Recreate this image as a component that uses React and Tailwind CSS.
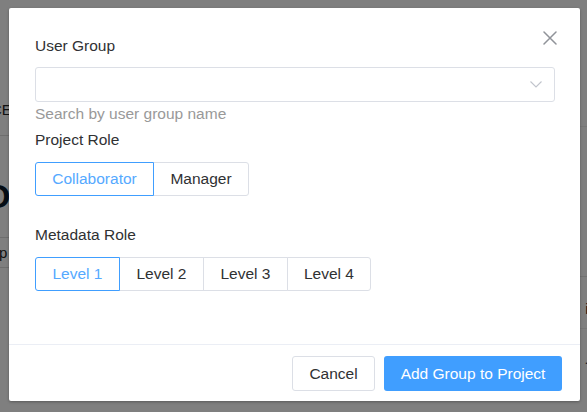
import React from "react";

function CloseIcon() {
  return (
    <svg width="14" height="14" viewBox="0 0 14 14" fill="none">
      <path d="M1 1 L13 13 M13 1 L1 13" stroke="#909399" strokeWidth="1.5" strokeLinecap="round" />
    </svg>
  );
}

function Chevron() {
  return (
    <svg width="12" height="7" viewBox="0 0 12 7" fill="none">
      <path d="M0.5 0.5 L6 6 L11.5 0.5" stroke="#c0c4cc" strokeWidth="1.1" />
    </svg>
  );
}

function SegButton({ children, active, first, className }) {
  return (
    <button
      className={
        "h-[34px] flex items-center justify-center text-[15.5px] border bg-white " +
        (first ? "" : "-ml-px ") +
        (active
          ? "relative z-10 border-[#409eff] text-[#55a9ff] "
          : "border-[#dcdfe6] text-[#303133] ") +
        (first ? "rounded-l-[3px] " : "") +
        className
      }
    >
      {children}
    </button>
  );
}

export default function App() {
  return (
    <div
      className="relative w-[587px] h-[412px] overflow-hidden bg-white"
      style={{ fontFamily: '"Liberation Sans", Arial, sans-serif' }}
    >
      {/* background page */}
      <div className="flex w-full h-full justify-between text-[#222]">
        <div className="flex flex-col w-[40px]">
          <div className="h-[100px]" />
          <div className="h-[36px] border-b border-[#ddd] flex items-start">
            <span className="-ml-[19px] text-[15px] leading-[20px]">ACE</span>
          </div>
          <div className="h-[40px]" />
          <div className="h-[40px] flex items-center">
            <span className="-ml-[16px] text-[34px] font-bold leading-[40px] text-[#0a1a2a]">OC</span>
          </div>
          <div className="h-[22px] border-b border-[#ddd]" />
          <div className="h-[30px] border-b border-[#ddd] flex items-center">
            <span className="-ml-[1px] text-[15px] leading-[20px]">p</span>
          </div>
        </div>
        <div className="flex flex-col w-[40px] items-end">
          <div className="h-[127px] w-full border-b border-[#eee]" />
          <div className="h-[150px] w-full border-b border-[#e5e5e5]" />
          <div className="h-[22px]" />
          <div className="h-[20px] w-full flex justify-end">
            <span className="-mr-[14px] text-[15px] leading-[20px]">ite</span>
          </div>
          <div className="h-[10px] w-full border-b border-[#eee]" />
          <div className="h-[28px]" />
          <span className="text-[12px] leading-[6px] -mr-[1px]">.</span>
        </div>
      </div>

      {/* overlay */}
      <div className="absolute inset-0 bg-black/50" />

      {/* modal */}
      <div className="absolute left-[9px] top-[8px] w-[571px] h-[393px] bg-white rounded-[2px] shadow-[0_1px_3px_rgba(0,0,0,0.3)] flex flex-col">
        <button className="absolute left-[533px] top-[22px] w-[16px] h-[16px] flex items-center justify-center">
          <CloseIcon />
        </button>

        <div className="flex flex-col pl-[26px] pr-[25px] pt-[28px] flex-1">
          <div className="text-[15.5px] leading-[20px] text-[#303133]">User Group</div>
          <div className="mt-[11px] h-[35px] border border-[#dcdfe6] rounded-[3px] flex items-center justify-end pr-[12px]">
            <Chevron />
          </div>
          <div className="mt-[2px] text-[15.5px] leading-[20px] text-[#999]">Search by user group name</div>
          <div className="mt-[6px] text-[15.5px] leading-[20px] text-[#303133]">Project Role</div>
          <div className="mt-[12px] flex">
            <SegButton active first className="w-[119px]">Collaborator</SegButton>
            <SegButton className="w-[96px] rounded-r-[3px]">Manager</SegButton>
          </div>
          <div className="mt-[29px] text-[15.5px] leading-[20px] text-[#303133]">Metadata Role</div>
          <div className="mt-[12px] flex">
            <SegButton active first className="w-[85px]">Level 1</SegButton>
            <SegButton className="w-[85px]">Level 2</SegButton>
            <SegButton className="w-[85px]">Level 3</SegButton>
            <SegButton className="w-[84px] rounded-r-[3px]">Level 4</SegButton>
          </div>
        </div>

        <div className="border-t border-[#ebeef5] flex justify-end gap-[9px] pt-[11px] pb-[10px] pr-[18px]">
          <button className="w-[83px] h-[35px] border border-[#dcdfe6] rounded-[3px] text-[15.5px] text-[#303133] bg-white">
            Cancel
          </button>
          <button className="w-[178px] h-[35px] rounded-[3px] text-[15.5px] text-white bg-[#409eff]">
            Add Group to Project
          </button>
        </div>
      </div>
    </div>
  );
}
